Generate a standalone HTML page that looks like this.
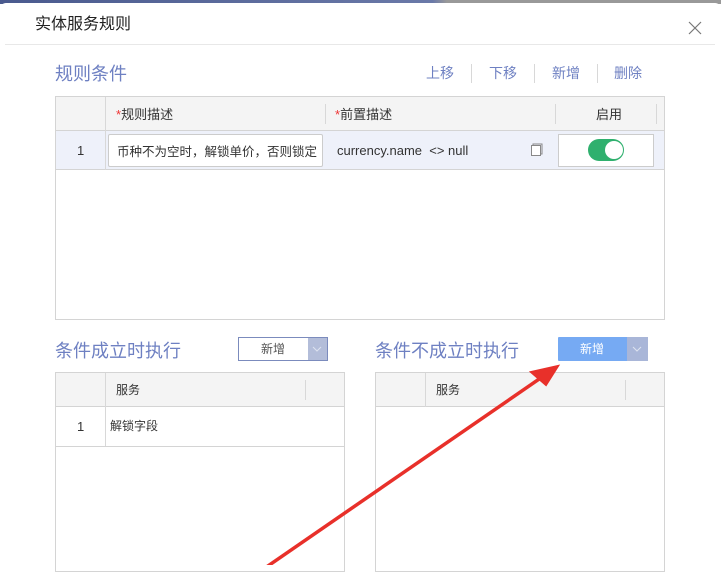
<!DOCTYPE html>
<html><head><meta charset="utf-8"><style>
*{margin:0;padding:0;box-sizing:border-box}
body{width:721px;height:565px;overflow:hidden;background:#fff;font-family:"Liberation Sans","Noto Sans CJK SC",sans-serif;position:relative}
.a{position:absolute}
.topbar{left:0;top:0;width:721px;height:4px;background:linear-gradient(90deg,#4a5a8e 0,#6a79a8 60%,#999 62%,#999 100%)}
.dlg{left:0;top:3px;width:721px;height:565px;background:#fff;border-radius:6px 6px 0 0}
.t{color:#6e80c2}
.sep{width:1px;height:19px;background:#d8d8d8;top:64px}
.tb{border:1px solid #d4d4d4}
.hd{background:#f4f4f4;border-bottom:1px solid #d4d4d4}
.vs{width:1px;background:#d8d8d8}
.s13{font-size:13px;color:#333}
</style></head><body>
<div class="a topbar"></div>
<div class="a dlg"></div>
<div class="a" style="left:35px;top:10px;font-size:16px;color:#222">实体服务规则</div>
<svg class="a" style="left:688px;top:21px" width="14" height="14"><path d="M1 1L13 13M13 1L1 13" stroke="#777" stroke-width="1.2"/></svg>
<div class="a" style="left:5px;top:44px;width:710px;height:1px;background:#e8e8e8"></div>
<div class="a t" style="left:55px;top:60px;font-size:18px">规则条件</div>
<div class="a t" style="left:426px;top:63px;font-size:14px">上移</div>
<div class="a sep" style="left:471px"></div>
<div class="a t" style="left:489px;top:63px;font-size:14px">下移</div>
<div class="a sep" style="left:534px"></div>
<div class="a t" style="left:552px;top:63px;font-size:14px">新增</div>
<div class="a sep" style="left:597px"></div>
<div class="a t" style="left:614px;top:63px;font-size:14px">删除</div>

<div class="a tb" style="left:55px;top:96px;width:610px;height:224px"></div>
<div class="a hd" style="left:56px;top:97px;width:608px;height:34px"></div>
<div class="a" style="left:56px;top:131px;width:608px;height:39px;background:#eef1fa;border-bottom:1px solid #d4d4d4"></div>
<div class="a vs" style="left:105px;top:97px;height:73px"></div>
<div class="a vs" style="left:325px;top:104px;height:20px"></div>
<div class="a vs" style="left:555px;top:104px;height:20px"></div>
<div class="a vs" style="left:656px;top:104px;height:20px"></div>
<div class="a s13" style="left:116px;top:104px"><span style="color:#e33">*</span>规则描述</div>
<div class="a s13" style="left:335px;top:104px"><span style="color:#e33">*</span>前置描述</div>
<div class="a s13" style="left:596px;top:104px">启用</div>
<div class="a s13" style="left:77px;top:143px">1</div>
<div class="a" style="left:108px;top:134px;width:215px;height:33px;background:#fff;border:1px solid #ccc;border-radius:2px"></div>
<div class="a s13" style="left:117px;top:141px;font-size:12.5px">币种不为空时，解锁单价，否则锁定</div>
<div class="a s13" style="left:337px;top:143px">currency.name&nbsp; &lt;&gt; null</div>
<svg class="a" style="left:530px;top:143px" width="14" height="14"><rect x="1.5" y="2.5" width="9" height="10" fill="#fff" stroke="#888"/><path d="M3 2.5V1H12V11H10.5" fill="none" stroke="#888"/></svg>
<div class="a" style="left:558px;top:134px;width:96px;height:33px;background:#fff;border:1px solid #ccc"></div>
<div class="a" style="left:588px;top:139px;width:36px;height:22px;border-radius:11px;background:#2fb06e"></div>
<div class="a" style="left:605px;top:141px;width:18px;height:18px;border-radius:9px;background:#fff"></div>

<div class="a t" style="left:55px;top:337px;font-size:18px">条件成立时执行</div>
<div class="a" style="left:238px;top:337px;width:90px;height:24px;border:1px solid #7b8bbd;background:#fff"></div>
<div class="a" style="left:308px;top:338px;width:19px;height:22px;background:#b3bdd9"></div>
<svg class="a" style="left:312px;top:345px" width="10" height="8"><path d="M1 2L5 6L9 2" fill="none" stroke="#dde3f0" stroke-width="1"/></svg>
<div class="a" style="left:261px;top:340px;font-size:12px;color:#555">新增</div>
<div class="a t" style="left:375px;top:337px;font-size:18px">条件不成立时执行</div>
<div class="a" style="left:558px;top:337px;width:90px;height:24px;background:#76aaf3;border-radius:1px"></div>
<div class="a" style="left:627px;top:337px;width:21px;height:24px;background:#a9b6d8"></div>
<svg class="a" style="left:632px;top:345px" width="10" height="8"><path d="M1 2L5 6L9 2" fill="none" stroke="#dde3f0" stroke-width="1"/></svg>
<div class="a" style="left:580px;top:340px;font-size:12px;color:#fff">新增</div>

<div class="a tb" style="left:55px;top:372px;width:290px;height:200px"></div>
<div class="a hd" style="left:56px;top:373px;width:288px;height:34px"></div>
<div class="a vs" style="left:105px;top:373px;height:73px"></div>
<div class="a vs" style="left:305px;top:380px;height:20px"></div>
<div class="a" style="left:56px;top:446px;width:288px;height:1px;background:#d4d4d4"></div>
<div class="a s13" style="left:116px;top:381px;font-size:12px">服务</div>
<div class="a s13" style="left:77px;top:419px">1</div>
<div class="a s13" style="left:110px;top:417px;font-size:12px">解锁字段</div>

<div class="a tb" style="left:375px;top:372px;width:290px;height:200px"></div>
<div class="a hd" style="left:376px;top:373px;width:288px;height:34px"></div>
<div class="a vs" style="left:425px;top:373px;height:34px"></div>
<div class="a vs" style="left:625px;top:380px;height:20px"></div>
<div class="a s13" style="left:436px;top:381px;font-size:12px">服务</div>

<svg class="a" style="left:0;top:0" width="721" height="565"><path d="M265 568L545 375" stroke="#e8302a" stroke-width="3.5"/><path d="M558 366L531 372L546 385Z" fill="#e8302a" stroke="#e8302a" stroke-width="2"/></svg>
</body></html>
